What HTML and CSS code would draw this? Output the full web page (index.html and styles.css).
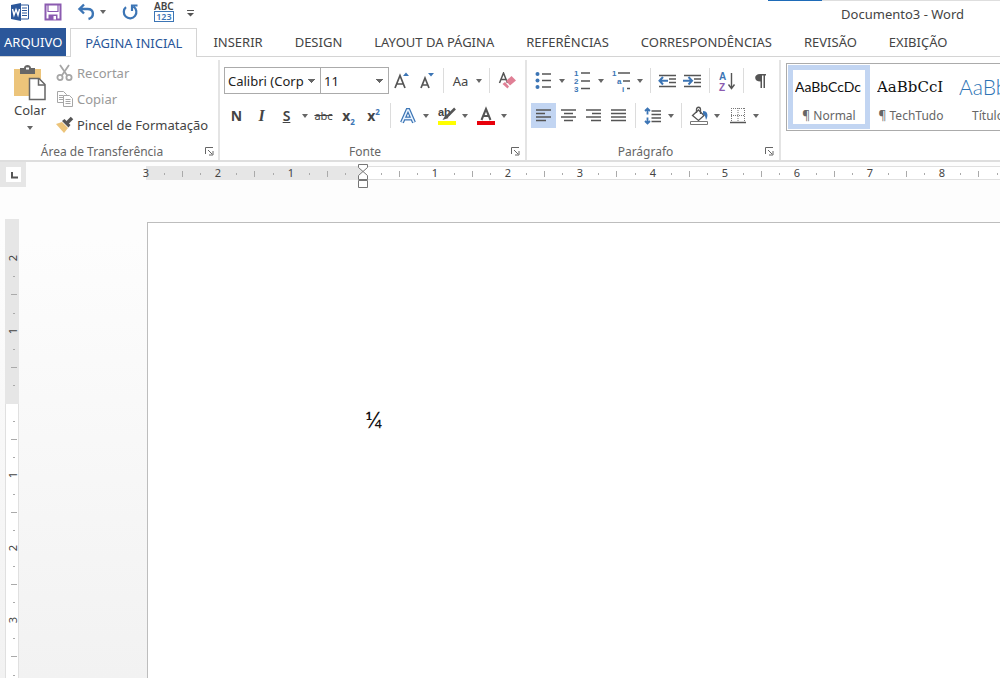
FILE: index.html
```html
<!DOCTYPE html>
<html lang="pt-BR">
<head>
    <meta charset="UTF-8">
    <meta name="viewport" content="width=device-width, initial-scale=1.0">
    <title>Documento3 - Word</title>
    <link rel="stylesheet" href="styles.css">
</head>
<body>

<header class="titlebar">
    <div class="quick-access">
        <svg class="word-logo" width="20" height="20" viewBox="0 0 20 20" aria-hidden="true">
            <path d="M10 3h8.500v14H10z" fill="#fff" stroke="#2b579a"/>
            <path d="M12 6h5M12 8.500h5M12 11h5M12 13.500h5" stroke="#2b579a"/>
            <path d="M1 3l10-2v18L1 17z" fill="#2b579a"/>
            <path d="M2.500 7l1.500 6 2-5.500 2 5.500 1.500-6" fill="none" stroke="#fff" stroke-width="1.400"/>
        </svg>
        <button class="quick-save" aria-label="Salvar">
            <svg width="18" height="18" viewBox="0 0 18 18"><path d="M1.500 1.500h15v15h-15z" fill="#fff" stroke="#8b5bb0" stroke-width="2"/><path d="M4 2v6.500h10V2" fill="none" stroke="#8b5bb0" stroke-width="1.200"/><path d="M4.500 11.500h9V17h-9z" fill="#8b5bb0"/><path d="M9.500 13h2.500v3.500H9.500z" fill="#fff"/></svg>
        </button>
        <button class="quick-undo" aria-label="Desfazer">
            <svg width="18" height="18" viewBox="0 0 18 18"><path d="M7 1.500L2.500 6 7 10.500M3 6h7.500c7 0 7 8.500 1 10" fill="none" stroke="#3c75b5" stroke-width="2.400"/></svg>
            <span class="caret"></span>
        </button>
        <button class="quick-redo" aria-label="Refazer">
            <svg width="18" height="18" viewBox="0 0 18 18"><path d="M5 4.200a6.300 6.300 0 1 0 7.500-.500M11 8V2.500h5.500" fill="none" stroke="#3c75b5" stroke-width="2.200"/></svg>
        </button>
        <button class="quick-words" aria-label="Contar palavras">
            <span class="abc">ABC</span>
            <span class="digits">123</span>
        </button>
        <button class="quick-more" aria-label="Personalizar">
            <svg width="9" height="9" viewBox="0 0 9 9"><path d="M1 1.500h7" stroke="#555"/><path d="M1 4h7L4.500 7.500z" fill="#555"/></svg>
        </button>
    </div>
    <h1 class="window-title">Documento3 - Word</h1>
</header>

<nav class="tabs">
    <a href="#" class="tab tab-file">ARQUIVO</a>
    <a href="#" class="tab tab-active">PÁGINA INICIAL</a>
    <a href="#" class="tab">INSERIR</a>
    <a href="#" class="tab">DESIGN</a>
    <a href="#" class="tab">LAYOUT DA PÁGINA</a>
    <a href="#" class="tab">REFERÊNCIAS</a>
    <a href="#" class="tab">CORRESPONDÊNCIAS</a>
    <a href="#" class="tab">REVISÃO</a>
    <a href="#" class="tab">EXIBIÇÃO</a>
</nav>

<div class="ribbon">
    <section class="group group-clipboard">
        <div class="group-body clipboard">
            <button class="paste">
                <svg width="34" height="36" viewBox="0 0 34 36"><path d="M1 4h27v27H1z" fill="#ecc47a"/><path d="M7 3h4c0-4 7-4 7 0h4v6H7z" fill="#666"/><path d="M13 3.500h3" stroke="#fff" stroke-width="2"/><path d="M16.500 13.500h9.500l6 6v15H16.500z" fill="#fff" stroke="#666" stroke-width="1.500"/><path d="M25.500 13.500v6.500H32" fill="none" stroke="#666" stroke-width="1.500"/></svg>
                <span>Colar</span>
                <span class="caret"></span>
            </button>
            <div class="clipboard-list">
                <button disabled>
                    <svg width="18" height="18" viewBox="0 0 18 18" fill="none" stroke="#a6a6a6" stroke-width="1.800"><path d="M4 1l7.500 11M13 1L5.500 12"/><circle cx="4" cy="13.500" r="2.600"/><circle cx="13" cy="13.500" r="2.600"/></svg>
                    Recortar
                </button>
                <button disabled>
                    <svg width="18" height="18" viewBox="0 0 18 18" fill="#fff" stroke="#a6a6a6"><path d="M1.500 1.500h6l3 3v8h-9z"/><path d="M3 5.500h4M3 7.500h4M3 9.500h4"/><path d="M7.500 5.500h6l3 3v8h-9z"/><path d="M9.500 9.500h5M9.500 11.500h5M9.500 13.500h5"/></svg>
                    Copiar
                </button>
                <button>
                    <svg width="18" height="18" viewBox="0 0 18 18"><path d="M0 8l6-2 6 6-4 5z" fill="#ecc47a"/><path d="M6 5l2.500-2 6 6-2 2.500z" fill="#555"/><path d="M11 7l5-5" stroke="#555" stroke-width="3.500"/></svg>
                    Pincel de Formatação
                </button>
            </div>
        </div>
        <footer class="group-footer"><span>Área de Transferência</span><button class="launcher" aria-label="Opções da área de transferência"><svg width="9" height="9" viewBox="0 0 9 9"><path d="M.5 7V.5H8M3 3l4 4M8 4v4H4" fill="none" stroke="#666"/></svg></button></footer>
    </section>

    <section class="group group-font">
        <div class="group-body">
            <div class="row">
                <select class="combo combo-font" aria-label="Fonte"><option>Calibri (Corp</option></select>
                <select class="combo combo-size" aria-label="Tamanho da fonte"><option>11</option></select>
                <button class="tool" aria-label="Aumentar fonte"><svg width="18" height="20" viewBox="0 0 18 20"><path d="M2 17L7 4.500 12 17M3.800 13h6.400" fill="none" stroke="#555" stroke-width="1.700"/><path d="M10 5h6l-3-3.500z" fill="#3c75b5"/></svg></button>
                <button class="tool" aria-label="Diminuir fonte"><svg width="18" height="20" viewBox="0 0 18 20"><path d="M3 17L7 7l4 10M4.500 14h5" fill="none" stroke="#555" stroke-width="1.700"/><path d="M10 2h6l-3 3.500z" fill="#3c75b5"/></svg></button>
                <span class="separator"></span>
                <button class="tool split"><span class="glyph">Aa</span><span class="caret"></span></button>
                <span class="separator"></span>
                <button class="tool" aria-label="Limpar formatação"><svg width="18" height="18" viewBox="0 0 18 18"><path d="M1.500 11L5.500 1l4 10M3 7.500h5" fill="none" stroke="#555" stroke-width="1.500"/><path d="M8 9l5.500-5L18 8.500l-6 5z" fill="#e07f95"/><path d="M7 10l4 4.500-1.500 2L4.500 12z" fill="#e07f95"/></svg></button>
            </div>
            <div class="row">
                <button class="tool glyph-bold">N</button>
                <button class="tool glyph-italic">I</button>
                <button class="tool split glyph-underline"><span class="glyph">S</span><span class="caret"></span></button>
                <button class="tool glyph-strike">abc</button>
                <button class="tool glyph-script">x<sub>2</sub></button>
                <button class="tool glyph-script">x<sup>2</sup></button>
                <span class="separator"></span>
                <button class="tool split" aria-label="Efeitos de texto"><svg width="18" height="18" viewBox="0 0 18 18"><path d="M3 15.500L8.500 3h1L15 15.500M5.500 11.500h7" fill="none" stroke="#3c75b5" stroke-width="4"/><path d="M3 15.500L8.500 3h1L15 15.500M5.500 11.500h7" fill="none" stroke="#eaf4ff" stroke-width="1.600"/></svg><span class="caret"></span></button>
                <button class="tool split marker" aria-label="Cor do realce"><svg width="20" height="22" viewBox="0 0 20 22"><text x="1" y="11">ab</text><path d="M18 3.500l-9 9" stroke="#555" stroke-width="2.500"/><path d="M8.500 10l3 3-6 2z" fill="#555"/><path d="M1 16h18v4H1z" fill="#ff0"/></svg><span class="caret"></span></button>
                <button class="tool split" aria-label="Cor da fonte"><svg width="20" height="20" viewBox="0 0 20 20"><path d="M5.500 14L10 3l4.500 11M7 10h6" fill="none" stroke="#555" stroke-width="2"/><path d="M1 15h18v4H1z" fill="#e8000b"/></svg><span class="caret"></span></button>
            </div>
        </div>
        <footer class="group-footer"><span>Fonte</span><button class="launcher" aria-label="Opções de fonte"><svg width="9" height="9" viewBox="0 0 9 9"><path d="M.5 7V.5H8M3 3l4 4M8 4v4H4" fill="none" stroke="#666"/></svg></button></footer>
    </section>

    <section class="group group-paragraph">
        <div class="group-body">
            <div class="row">
                <button class="tool split" aria-label="Marcadores"><svg width="17" height="19" viewBox="0 0 17 19"><path d="M7 3h9M7 9.500h9M7 16h9" stroke="#555" stroke-width="1.400"/><g fill="#3c75b5"><circle cx="2.500" cy="3" r="2"/><circle cx="2.500" cy="9.500" r="2"/><circle cx="2.500" cy="16" r="2"/></g></svg><span class="caret"></span></button>
                <button class="tool split numbering" aria-label="Numeração"><svg width="17" height="25" viewBox="0 0 17 25"><path d="M7 5h9M7 13h9M7 20.500h9" stroke="#555" stroke-width="1.400"/><text x="0" y="8">1</text><text x="0" y="16">2</text><text x="0" y="24">3</text></svg><span class="caret"></span></button>
                <button class="tool split numbering" aria-label="Lista de vários níveis"><svg width="19" height="25" viewBox="0 0 19 25"><path d="M6 5h12M11 13h7M15 20.500h3" stroke="#555" stroke-width="1.400"/><text x="0" y="8">1</text><text x="5" y="16">a</text><text x="10" y="24">i</text></svg><span class="caret"></span></button>
                <span class="separator"></span>
                <button class="tool" aria-label="Diminuir recuo"><svg width="19" height="14" viewBox="0 0 19 14"><path d="M1 1.500h17M11 5h7M11 8.500h7M1 12.500h17" stroke="#555" stroke-width="1.400"/><path d="M5 3L1.500 6.700 5 10.500M2 6.700h8" fill="none" stroke="#3c75b5" stroke-width="2"/></svg></button>
                <button class="tool" aria-label="Aumentar recuo"><svg width="19" height="14" viewBox="0 0 19 14"><path d="M1 1.500h17M11 5h7M11 8.500h7M1 12.500h17" stroke="#555" stroke-width="1.400"/><path d="M5.500 3L9 6.700l-3.500 3.800M0 6.700h8" fill="none" stroke="#3c75b5" stroke-width="2"/></svg></button>
                <span class="separator"></span>
                <button class="tool sort" aria-label="Classificar"><svg width="18" height="24" viewBox="0 0 18 24"><text x="1" y="11" class="sort-a">A</text><text x="1" y="22" class="sort-z">Z</text><path d="M13.500 4v15M10.500 15.500l3 4 3-4" fill="none" stroke="#555" stroke-width="1.400"/></svg></button>
                <span class="separator"></span>
                <button class="tool" aria-label="Mostrar tudo"><svg width="13" height="14" viewBox="0 0 13 14"><path d="M6 0h6v1.500h-1V14H9.500V1.500H8V14H6.500V7.500C-.5 7.500-.5 0 6 0z" fill="#555"/></svg></button>
            </div>
            <div class="row">
                <button class="tool tool-on" aria-label="Alinhar à esquerda"><svg width="17" height="13" viewBox="0 0 17 13"><path d="M1 1h15M1 4.500h9M1 8h15M1 11.500h10" stroke="#555" stroke-width="1.400"/></svg></button>
                <button class="tool" aria-label="Centralizar"><svg width="17" height="13" viewBox="0 0 17 13"><path d="M1 1h15M4 4.500h9M1 8h15M4 11.500h9" stroke="#555" stroke-width="1.400"/></svg></button>
                <button class="tool" aria-label="Alinhar à direita"><svg width="17" height="13" viewBox="0 0 17 13"><path d="M1 1h15M7 4.500h9M1 8h15M6 11.500h10" stroke="#555" stroke-width="1.400"/></svg></button>
                <button class="tool" aria-label="Justificar"><svg width="17" height="13" viewBox="0 0 17 13"><path d="M1 1h15M1 4.500h15M1 8h15M1 11.500h15" stroke="#555" stroke-width="1.400"/></svg></button>
                <span class="separator"></span>
                <button class="tool split" aria-label="Espaçamento"><svg width="18" height="18" viewBox="0 0 18 18"><path d="M7.500 4H17M7.500 7.500H17M7.500 11H17M7.500 14.500H17" stroke="#555" stroke-width="1.400"/><path d="M3.500 1v6.500M3.500 10.500V17M1 4l2.500-2.500L6 4M1 14l2.500 2.500L6 14" fill="none" stroke="#3c75b5" stroke-width="1.800"/></svg><span class="caret"></span></button>
                <span class="separator"></span>
                <button class="tool split" aria-label="Sombreamento"><svg width="20" height="20" viewBox="0 0 20 20"><path d="M9.500 4L15 9.500l-5.500 5-6-5z" fill="#fff" stroke="#555" stroke-width="1.300"/><path d="M7.500 7V3.500c0-3 4-3 4 0V8" fill="none" stroke="#555" stroke-width="1.300"/><path d="M14 5c5 0 5.500 5 3 9-.5-3-1-5-3-6z" fill="#3c75b5"/><path d="M1.500 15.500h17v3h-17z" fill="#fff" stroke="#777"/></svg><span class="caret"></span></button>
                <button class="tool split" aria-label="Bordas"><svg width="16" height="17" viewBox="0 0 16 17"><path d="M1 1.500h14M1 8.500h14M1.500 1v13M8 1v13M14.500 1v13" stroke="#777" stroke-dasharray="1 1"/><path d="M0 15.500h16" stroke="#555" stroke-width="1.500"/></svg><span class="caret"></span></button>
            </div>
        </div>
        <footer class="group-footer"><span>Parágrafo</span><button class="launcher" aria-label="Opções de parágrafo"><svg width="9" height="9" viewBox="0 0 9 9"><path d="M.5 7V.5H8M3 3l4 4M8 4v4H4" fill="none" stroke="#666"/></svg></button></footer>
    </section>

    <section class="group-styles">
        <button class="style style-on"><span class="sample sample-normal">AaBbCcDc</span><span>¶ Normal</span></button>
        <button class="style"><span class="sample sample-serif">AaBbCcI</span><span>¶ TechTudo</span></button>
        <button class="style"><span class="sample sample-title">AaBbC</span><span>Título 1</span></button>
    </section>
</div>

<main class="workspace">
    <div class="ruler-bar">
        <button class="tab-stop" aria-label="Tabulação"><svg width="15" height="15" viewBox="0 0 15 15"><path d="M0 0h15v15H0z" fill="#fff"/><path d="M6 5v5.500h6" fill="none" stroke="#555" stroke-width="2"/></svg></button>
        <svg class="ruler-x" id="ruler-x"></svg>
    </div>
    <div class="canvas">
        <svg class="ruler-y" id="ruler-y"></svg>
        <article class="page"><p>¼</p></article>
    </div>
</main>

<script src="ruler.js"></script>
</body>
</html>
```
FILE: styles.css
```css
* {
    box-sizing: border-box;
}

body {
    margin: 0;
    height: 100vh;
    display: flex;
    flex-direction: column;
    overflow: hidden;
    font-family: 'Noto Sans', 'Open Sans', sans-serif;
    font-size: 13px;
    color: #444;
    background-color: #fff;
}

button {
    display: flex;
    align-items: center;
    justify-content: center;
    padding: 0;
    border: 0;
    background: none;
    font: inherit;
    color: inherit;
}

svg {
    flex: none;
    display: block;
}

.caret {
    flex: none;
    border: 3px solid transparent;
    border-top: 4px solid #666;
    border-bottom: 0;
}

/* title bar */
.titlebar {
    position: relative;
    display: flex;
    justify-content: space-between;
    align-items: center;
    height: 28px;
    padding: 0 36px 4px 10px;
}

.titlebar::after {
    content: "";
    position: absolute;
    top: 0;
    right: 0;
    width: 232px;
    height: 1px;
    background: linear-gradient(90deg, #1e6bb8 54px, #dedede 54px);
}

.quick-access {
    display: flex;
    align-items: center;
}

.quick-save {
    margin-left: 14px;
}

.quick-undo {
    gap: 5px;
    margin-left: 15px;
}

.quick-redo {
    margin-left: 15px;
}

.quick-words {
    flex-direction: column;
    margin-left: 15px;
    line-height: 9px;
    font-size: 10px;
    font-weight: 600;
}

.digits {
    padding: 0 1px;
    border: 1px solid #3c75b5;
    font-size: 9px;
    color: #3c75b5;
}

.quick-more {
    margin-left: 12px;
    padding-top: 3px;
}

.window-title {
    margin: 4px 0 0;
    font-size: 13px;
    font-weight: 400;
}

/* tabs */
.tabs {
    display: flex;
    height: 29px;
    border-bottom: 1px solid #d4d4d4;
}

.tab {
    flex: none;
    padding: 0 16px;
    line-height: 28px;
    color: #444;
    text-decoration: none;
}

.tab-file {
    height: 28px;
    margin-right: 4px;
    padding: 0 4px;
    background-color: #2b579a;
    color: #fff;
}

.tab-active {
    height: 29px;
    padding: 0 14px;
    border: 1px solid #d4d4d4;
    border-bottom: 0;
    background-color: #fff;
    color: #2b579a;
}

/* ribbon */
.ribbon {
    display: flex;
    flex: none;
    height: 105px;
    padding-top: 3px;
    border-bottom: 2px solid #dedede;
}

.group {
    flex: none;
    display: flex;
    flex-direction: column;
    border-right: 2px solid #e4e4e4;
}

.group-clipboard {
    width: 220px;
}

.group-font {
    width: 307px;
}

.group-paragraph {
    width: 254px;
}

.group-body {
    flex: 1;
    padding: 8px 0 0 4px;
}

.group-footer {
    display: flex;
    align-items: center;
    height: 18px;
    padding-right: 4px;
    font-size: 12px;
    color: #666;
}

.group-footer span {
    flex: 1;
    text-align: center;
}

.group-footer .launcher {
    width: 10px;
}

.group-font .group-footer,
.group-paragraph .group-footer {
    padding-right: 5px;
}

.clipboard {
    display: flex;
    padding: 0;
}

.paste {
    flex-direction: column;
    justify-content: flex-start;
    width: 56px;
    padding: 5px 0 0 4px;
}

.paste .caret {
    margin-top: 7px;
}

.clipboard-list button {
    gap: 3px;
    height: 26px;
}

.clipboard-list button:disabled {
    color: #999;
}

.row {
    display: flex;
    align-items: center;
    height: 25px;
    margin-bottom: 10px;
}

.tool {
    flex: none;
    width: 25px;
    height: 25px;
}

.tool-on {
    background-color: #c2d5f2;
}

.split {
    display: grid;
    grid-template-columns: 25px 12px;
    justify-items: center;
    width: 37px;
}

.split + .split {
    margin-left: 2px;
}

.separator {
    width: 1px;
    height: 25px;
    margin: 0 4px;
    background-color: #dcdcdc;
}

.combo {
    height: 27px;
    padding: 0 3px;
    border: 1px solid #ababab;
    border-radius: 0;
    appearance: none;
    font: inherit;
    color: #222;
    background: linear-gradient(135deg, #666 50%, transparent 50%) right 4px center / 4px 4px no-repeat,
        linear-gradient(225deg, #666 50%, transparent 50%) right 8px center / 4px 4px no-repeat, #fff;
}

.combo-font {
    width: 97px;
}

.combo-size {
    width: 69px;
    margin-left: -1px;
}

.glyph {
    font-size: 13px;
}

.glyph-bold {
    font-size: 14px;
    font-weight: 700;
}

.glyph-italic {
    font-family: 'Liberation Serif', serif;
    font-size: 16px;
    font-style: italic;
    font-weight: 700;
}

.glyph-underline .glyph {
    font-size: 14px;
    font-weight: 600;
    text-decoration: underline;
}

.glyph-strike {
    font-size: 11px;
    text-decoration: line-through;
}

.glyph-script {
    display: block;
    font-size: 14px;
    font-weight: 700;
    line-height: 24px;
}

.glyph-script sub,
.glyph-script sup {
    font-size: 8px;
    line-height: 0;
    color: #3c75b5;
}

.marker text,
.numbering text,
.sort text {
    font-family: 'Liberation Sans', sans-serif;
    font-weight: 700;
}

.marker text {
    font-size: 11px;
    fill: #444;
}

.numbering text {
    font-size: 8px;
    line-height: 8px;
    fill: #3c75b5;
}

.sort text {
    font-size: 10px;
}

.sort .sort-a {
    fill: #3c75b5;
}

.sort .sort-z {
    fill: #8b5bb0;
}

/* style gallery */
.group-styles {
    flex: 1;
    display: flex;
    height: 68px;
    min-width: 0;
    margin: 3px 0 0 5px;
    padding: 1px;
    border: 1px solid #ababab;
    border-right: 0;
    overflow: hidden;
}

.style {
    flex: none;
    flex-direction: column;
    width: 82px;
    border: 5px solid transparent;
    font-size: 12px;
    color: #666;
}

.style-on {
    border-color: #c2d5f2;
}

.sample {
    width: 68px;
    height: 36px;
    line-height: 32px;
    text-align: left;
    white-space: nowrap;
    overflow: hidden;
    color: #111;
}

.sample-normal {
    font-family: Lato, sans-serif;
    font-size: 14px;
}

.sample-serif {
    font-family: 'DejaVu Serif', serif;
    font-size: 15px;
}

.sample-title {
    font-family: Lato, sans-serif;
    font-size: 21px;
    font-weight: 300;
    color: #2e74b5;
}

/* rulers and document */
.workspace {
    flex: 1;
    display: flex;
    flex-direction: column;
    min-height: 0;
    background: linear-gradient(#fdfdfd 15%, #f2f2f2);
}

.ruler-bar {
    display: flex;
    align-items: flex-start;
    height: 57px;
}

.tab-stop {
    width: 26px;
    height: 25px;
    background-color: #e6e6e6;
}

.ruler-x {
    flex: 1;
    height: 30px;
    margin-left: 114px;
}

.canvas {
    flex: 1;
    display: flex;
    min-height: 0;
}

.ruler-y {
    width: 14px;
    height: 100%;
    margin-left: 5px;
}

.ruler-area {
    fill: #fff;
    stroke: #e0e0e0;
}

.ruler-margin {
    fill: #e6e6e6;
}

.ruler-x text,
.ruler-y text {
    font-size: 11px;
    fill: #444;
    text-anchor: middle;
}

.ruler-tick {
    stroke: #aaa;
}

.ruler-marker {
    fill: #fff;
    stroke: #777;
}

.page {
    flex: 1;
    margin: 3px 0 0 128px;
    padding: 180px 0 0 217px;
    border: 1px solid #bdbdbd;
    border-right: 0;
    border-bottom: 0;
    background-color: #fff;
    font-family: Lato, sans-serif;
    font-size: 24px;
    line-height: 32px;
    color: #111;
}

.page p {
    margin: 0;
}
```
FILE: ruler.js
```js
const CM = 72.4;

// labels every centimetre, a line at each half, a dot at each quarter
function marks(first, zero, length, place) {
    let out = '';
    for (let q = first * 4; zero + q * CM / 4 < length; q++) {
        const pos = Math.round(zero + q * CM / 4);
        if (q === 0) continue;
        if (q % 4 !== 0) out += place.tick(pos, q % 2 === 0 ? 6 : 2);
        else if (pos + 6 < length) out += place.label(pos, Math.abs(q / 4));
    }
    return out;
}

function drawHorizontal() {
    const ruler = document.getElementById('ruler-x');
    const length = ruler.getBoundingClientRect().width;
    const zero = 223;
    ruler.innerHTML =
        `<rect class="ruler-area" x="6.5" y="4.5" width="${length}" height="13"/>` +
        `<rect class="ruler-margin" x="6" y="4" width="${zero - 6}" height="14"/>` +
        marks(-3, zero, length, {
            label: (x, n) => `<text x="${x}" y="15">${n}</text>`,
            tick: (x, h) => `<path class="ruler-tick" d="M${x + 0.5} ${12 - h / 2}v${h}"/>`
        }) +
        `<path class="ruler-marker" d="M${zero - 4.5} 2.5h9v3l-9 8v4h9v-4l-9-8zM${zero - 4.5} 18.5h9v7h-9z"/>`;
}

function drawVertical() {
    const ruler = document.getElementById('ruler-y');
    const length = ruler.getBoundingClientRect().height;
    const zero = 184;
    ruler.innerHTML =
        `<rect class="ruler-area" x="0.5" y="0.5" width="13" height="${length}"/>` +
        `<rect class="ruler-margin" x="0" y="0" width="14" height="${zero + 1}"/>` +
        marks(-2, zero, length, {
            label: (y, n) => `<text transform="translate(12 ${y}) rotate(-90)">${n}</text>`,
            tick: (y, w) => `<path class="ruler-tick" d="M${9 - w / 2} ${y + 0.5}h${w}"/>`
        });
}

function drawRulers() {
    drawHorizontal();
    drawVertical();
}

window.addEventListener('resize', drawRulers);
drawRulers();
```
